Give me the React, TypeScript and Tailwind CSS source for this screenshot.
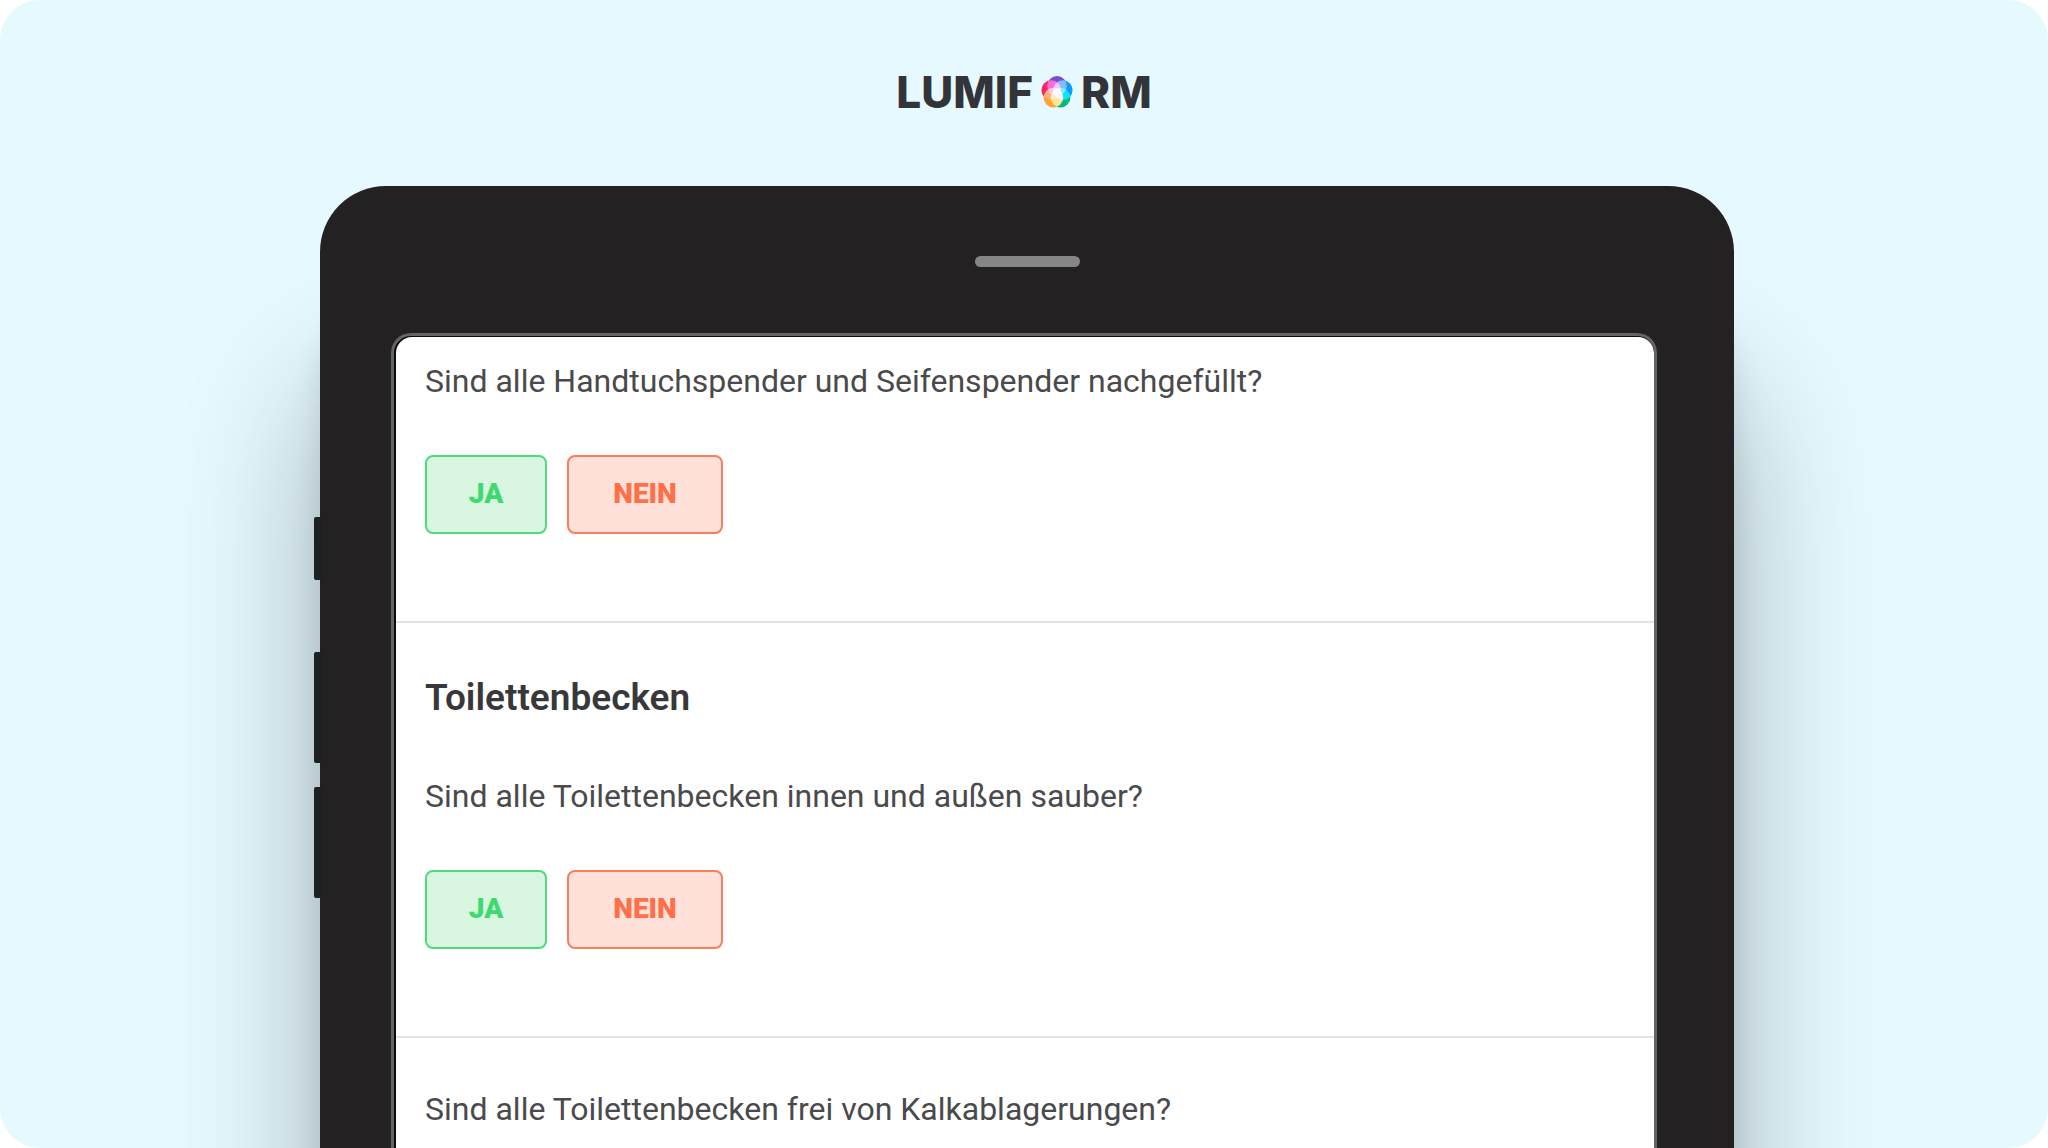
import clsx from 'clsx'

type Item = {
  title?: string
  question: string
  hasAnswers: boolean
}

const items: Item[] = [
  { question: 'Sind alle Handtuchspender und Seifenspender nachgefüllt?', hasAnswers: true },
  { title: 'Toilettenbecken', question: 'Sind alle Toilettenbecken innen und außen sauber?', hasAnswers: true },
  { question: 'Sind alle Toilettenbecken frei von Kalkablagerungen?', hasAnswers: false },
]

function LogoMark() {
  return (
    <svg viewBox="0 0 32 32" className="mx-2 size-8" aria-hidden="true">
      <g className="isolate">
        <circle cx="16" cy="9.9" r="9.8" fill="#7d50c8" />
        <circle cx="21.8" cy="14.1" r="9.8" fill="#0a9dff" className="mix-blend-screen" />
        <circle cx="19.6" cy="21.6" r="9.8" fill="#00b884" className="mix-blend-screen" />
        <circle cx="12.4" cy="21.6" r="9.8" fill="#ffa22e" className="mix-blend-screen" />
        <circle cx="10.2" cy="14.1" r="9.8" fill="#f5285f" className="mix-blend-screen" />
      </g>
    </svg>
  )
}

function Logo() {
  return (
    <div className="flex items-center justify-center font-['Inter',sans-serif] text-[44px] leading-[48px] font-extrabold text-[#33343a]">
      <span>LUMIF</span>
      <LogoMark />
      <span>RM</span>
    </div>
  )
}

function Answers() {
  return (
    <div className="mt-[54px] mb-[87px] flex gap-5 text-[28px] font-black">
      <button type="button" className="h-[79px] w-[122px] rounded-lg border-2 border-[#4fdb7c] bg-[#d8f6e0] pb-0.5 text-[#3fd970]">
        JA
      </button>
      <button type="button" className="h-[79px] w-[156px] rounded-lg border-2 border-[#f97f5f] bg-[#ffe1da] pb-0.5 text-[#ff7048]">
        NEIN
      </button>
    </div>
  )
}

function ChecklistItem({ item, first }: { item: Item; first: boolean }) {
  return (
    <section
      className={clsx(
        'px-[29px]',
        first ? 'pt-6' : 'border-t-2 border-[#e4e4e4]',
        !first && (item.title ? 'pt-[55px]' : 'pt-[51px]'),
      )}
    >
      {item.title ? <h2 className="mb-[58px] text-[37px] leading-[40px] font-semibold text-[#38383a]">{item.title}</h2> : null}
      <p className="text-[32px] leading-[40px] text-[#4a4a4c]">{item.question}</p>
      {item.hasAnswers ? <Answers /> : null}
    </section>
  )
}

function Tablet() {
  return (
    <div className="relative mr-[314px] ml-80 flex flex-1 flex-col rounded-t-[66px] bg-[#232122] shadow-[0_200px_140px_rgba(0,0,0,0.3),0_130px_30px_rgba(0,0,0,0.1)]">
      <div className="absolute top-[331px] -left-[6px] flex w-2 flex-col">
        <span className="h-[63px] rounded-l-xs bg-[#1c2022]" />
        <span className="mt-[72px] h-[111px] rounded-l-xs bg-[#1c2022]" />
        <span className="mt-6 h-[111px] rounded-l-xs bg-[#1c2022]" />
      </div>
      <div className="mt-[70px] mb-[66px] h-[11px] w-[105px] self-center rounded-full bg-[#868686]" />
      <div className="mr-[77px] ml-[71px] flex-1 overflow-hidden rounded-t-[20px] border-x-3 border-t-3 border-[#656365] bg-[#0c0b0c] pt-px pl-0.5">
        <div className="h-full rounded-t-[16px] bg-white">
          {items.map((item, index) => (
            <ChecklistItem key={item.question} item={item} first={index === 0} />
          ))}
        </div>
      </div>
    </div>
  )
}

export default function App() {
  return (
    <div className="h-screen overflow-hidden bg-white font-['Roboto',sans-serif]">
      <main className="flex h-full flex-col overflow-hidden rounded-[40px] bg-[#e6f9ff]">
        <h1 className="mt-[68px] mb-[70px]" aria-label="Lumiform">
          <Logo />
        </h1>
        <Tablet />
      </main>
    </div>
  )
}
